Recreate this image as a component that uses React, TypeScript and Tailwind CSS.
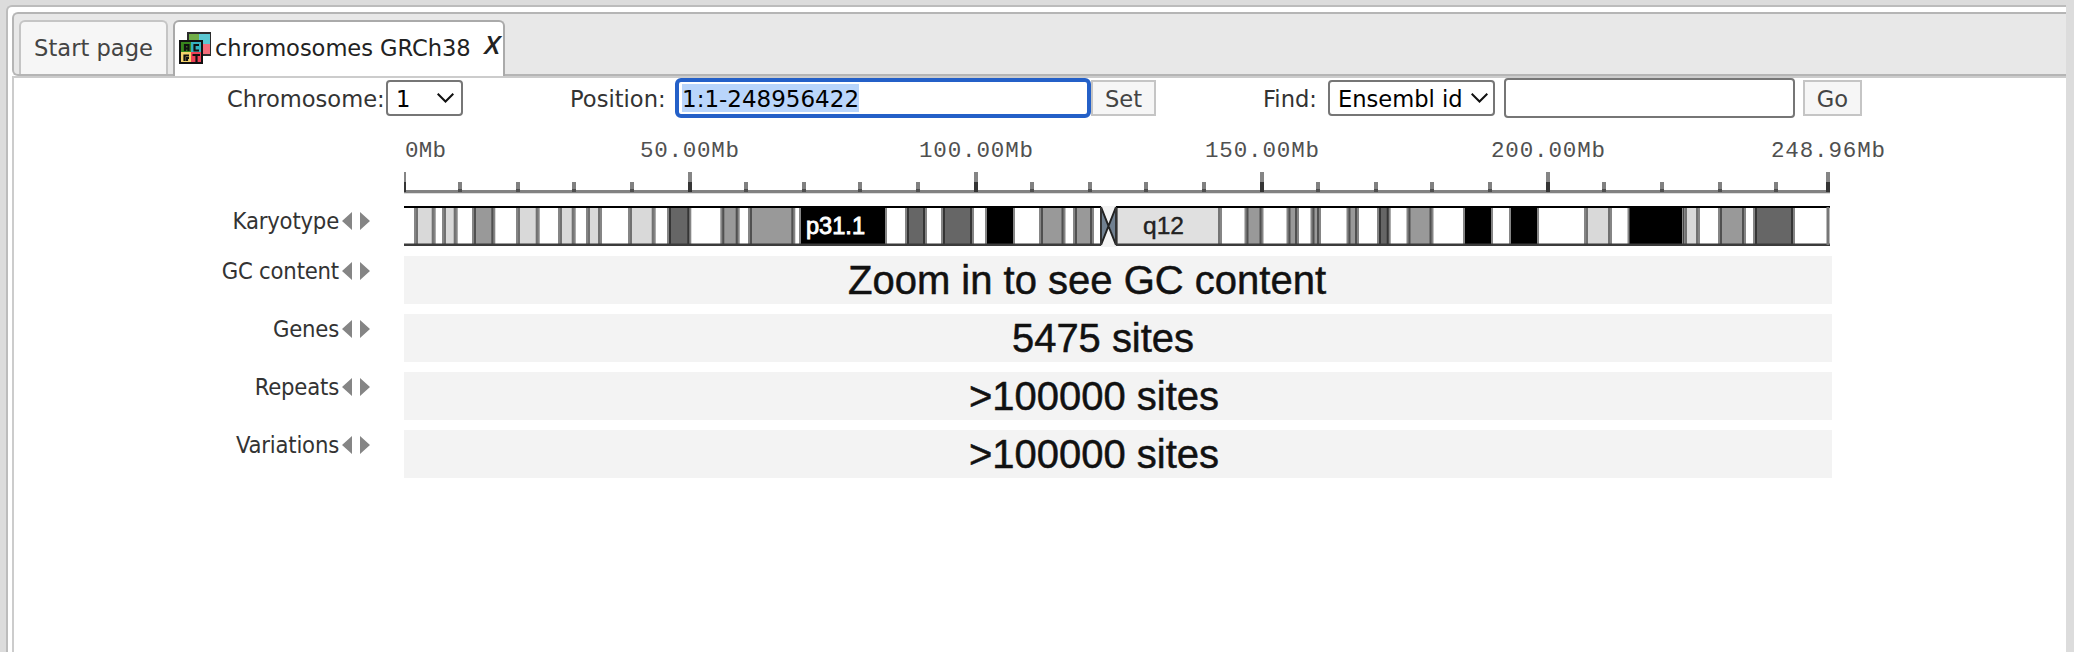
import React from "react";

// [start, end, fill] of every stained band, in pixels from the chromosome's left end
const bands: [number, number, string][] = [
  [12, 29.7, "#d9d9d9"], [40, 51.7, "#d9d9d9"], [70, 89.3, "#999999"], [114, 133.7, "#d9d9d9"],
  [156, 169.7, "#d9d9d9"], [184, 196, "#d9d9d9"], [226, 249.7, "#d9d9d9"], [265, 285.3, "#666666"],
  [318.3, 333.7, "#999999"], [346, 389.3, "#999999"], [397, 481, "#000000"], [503, 521, "#666666"],
  [539, 568, "#666666"], [583, 609, "#000000"], [637, 659.5, "#999999"], [671, 688, "#999999"],
  [712, 816, "#e0e0e0"], [842.5, 857.5, "#999999"], [884.5, 893, "#999999"], [908.5, 915, "#999999"],
  [944.5, 953, "#999999"], [975, 984.7, "#666666"], [1004.5, 1027.5, "#999999"], [1061, 1087, "#000000"],
  [1107, 1133, "#000000"], [1182, 1206, "#d9d9d9"], [1225.5, 1278, "#000000"], [1281, 1294, "#d9d9d9"],
  [1316, 1340, "#999999"], [1351, 1389, "#666666"],
];

const ticks = [56, 114, 170, 228, 342, 400, 456, 514, 628, 686, 742, 800, 914, 972, 1028, 1086, 1200, 1258, 1316, 1372];
const majors = [0, 286, 572, 858, 1144, 1424];

const scale: [number, number, string][] = [
  [1, 41, "0Mb"], [236, 99, "50.00Mb"], [515, 114, "100.00Mb"],
  [801, 114, "150.00Mb"], [1087, 114, "200.00Mb"], [1367, 114, "248.96Mb"],
];

function Ruler() {
  return (
    <svg width="1500" height="64" className="block" fontFamily="'Liberation Mono', monospace" fontSize="22.5" fill="#505050">
      {scale.map(([x, w, label]) => (
        <text key={label} x={x} y="23" textLength={w} lengthAdjust="spacing">{label}</text>
      ))}
      <rect x="0" y="56" width="1426" height="3" fill="#828282" />
      <rect x="0" y="59" width="1426" height="1" fill="#dedede" />
      {ticks.map((x) => (
        <g key={x}>
          <rect x={x - 2} y="48" width="4" height="8" fill="#808080" />
          <rect x={x - 2} y="55" width="4" height="3" fill="#505050" />
        </g>
      ))}
      {majors.map((x) => (
        <g key={x}>
          <rect x={x - 2} y="38" width="4" height="10" fill="#858585" />
          <rect x={x - 2} y="48" width="4" height="10" fill="#353535" />
        </g>
      ))}
    </svg>
  );
}

function Karyotype() {
  return (
    <svg width="1440" height="42" className="block" fontFamily="'Liberation Sans', sans-serif" fontSize="24">
      <rect x="0" y="0" width="1426" height="38" fill="#ffffff" />
      {bands.map(([a, b, fill]) => (
        <g key={a}>
          <rect x={a} y="0" width={b - a} height="38" fill={fill} />
          <rect x={a - 2} y="0" width="4" height="38" fill="#000000" fillOpacity="0.48" />
          <rect x={b - 2} y="0" width="4" height="38" fill="#000000" fillOpacity="0.48" />
        </g>
      ))}
      <rect x="0" y="0" width="1426" height="2" fill="#000000" />
      <rect x="0" y="37.5" width="1426" height="2.5" fill="#3b3b3b" />
      <rect x="1422.5" y="1" width="3" height="38" fill="#777777" />
      <rect x="697" y="0" width="15" height="41" fill="#f3f3f3" />
      <path d="M697 1L705 19L697 39ZM712 1L705 19L712 39Z" fill="#708090" />
      <path d="M697 1L712 39M712 1L697 39" stroke="#222222" strokeWidth="2" fill="none" />
      <path d="M697 1V39M712 1V39" stroke="#333333" strokeWidth="2" />
      <text x="402" y="28" fill="#ffffff" stroke="#ffffff" strokeWidth="0.9" textLength="59" lengthAdjust="spacingAndGlyphs">p31.1</text>
      <text x="739" y="28" fill="#222222" stroke="#222222" strokeWidth="0.4" textLength="41" lengthAdjust="spacingAndGlyphs">q12</text>
    </svg>
  );
}

function TrackLabel({ children }: { children: React.ReactNode }) {
  return (
    <div className="flex h-[30px] w-[356px] items-center justify-end whitespace-nowrap font-['DejaVu_Sans_Condensed','DejaVu_Sans',sans-serif] text-[23.6px] tracking-[-0.2px] text-[#333] [font-stretch:condensed]">
      <span className="pt-0.5">{children}</span>
      <svg width="28" height="18" className="ml-[3px] block" fill="#858585">
        <path d="M0 9L10 0V18ZM28 9L18 0V18Z" />
      </svg>
    </div>
  );
}

const tracks: [string, string, number, number][] = [
  ["GC content", "Zoom in to see GC content", 444, 478],
  ["Genes", "5475 sites", 608, 182],
  ["Repeats", ">100000 sites", 565, 250],
  ["Variations", ">100000 sites", 565, 250],
];

function SequenceIcon() {
  return (
    <svg width="32" height="32" viewBox="0 0 32 32" className="block shrink-0">
      <path d="M8 0H32V24H8Z" fill="#2c2c2c" />
      <path d="M10 2H20V12H10Z" fill="#70ad47" />
      <path d="M20 2H31V12H20Z" fill="#5bc8d2" />
      <path d="M20 12H31V22H20Z" fill="#f46d7a" />
      <path d="M0 8H24V32H0Z" fill="#111" />
      <path d="M2 10H12V20H2Z" fill="#38851d" />
      <path d="M12 10H22V20H12Z" fill="#35b4c0" />
      <path d="M2 20H12V30H2Z" fill="#f5d36b" />
      <path d="M12 20H22V30H12Z" fill="#ee4055" />
      <path d="M6 19V13H9.500V19M6 16.500H9.500M20 13H15.500V18.500H20M10 23.500H5.500V29M10 26H8V29M13.500 23H21M17.500 23V30" fill="none" stroke="#111" strokeWidth="2.2" />
    </svg>
  );
}

function Chevron() {
  return (
    <svg width="17" height="10" className="block shrink-0" fill="none" stroke="#111" strokeWidth="2">
      <path d="M0.700 0.700L8.500 8.500L16.300 0.700" />
    </svg>
  );
}

export default function App() {
  return (
    <div className="h-[652px] w-[2074px] overflow-hidden bg-[#dcdcdc] pl-1.5 pt-[5px] font-['DejaVu_Sans',sans-serif] text-[22.6px] leading-none text-[#333]">
      <div className="h-[660px] w-[2060px] rounded-tl-md border-l-2 border-t-2 border-[#bcbcbc] bg-white pl-1 pt-[5px]">
        <div className="flex h-16 items-end rounded-l-md border-2 border-r-0 border-[#b5b5b5] bg-[#e8e8e8] pl-[5px]">
          <div className="flex h-[54px] w-[149px] items-center justify-center rounded-t-md border-2 border-b-0 border-[#c5c5c5] bg-[#f6f6f6] text-[#444]">
            <span>Start page</span>
          </div>
          <div className="relative -mb-0.5 ml-[5px] flex h-14 w-[332px] items-center rounded-t-md border-2 border-b-0 border-[#aaa] bg-white pb-0.5 pl-1 text-[#222]">
            <SequenceIcon />
            <span className="ml-1 whitespace-nowrap tracking-[-0.05px]">chromosomes GRCh38</span>
            <span className="absolute right-[3px] top-2.5 origin-right scale-x-110 font-['Open_Sans',sans-serif] text-[25px] font-semibold italic">X</span>
          </div>
        </div>
        <div className="h-[590px] border-l-2 border-t-2 border-[#ccc] bg-white">
          <div className="flex h-10 items-center pl-[213px]">
            <span className="w-[159px] whitespace-nowrap pt-0.5">Chromosome:</span>
            <div className="flex h-9 w-[77px] items-center justify-between rounded-[4px] border-2 border-[#767676] pl-2 pr-[7px] text-black">
              <span className="pt-0.5">1</span><Chevron />
            </div>
            <span className="ml-[107px] w-[105px] whitespace-nowrap pt-0.5">Position:</span>
            <div className="flex h-10 w-[416px] items-center rounded-md border-4 border-[#2460c8] pl-[3px] text-black">
              <span className="flex h-7 items-center bg-[#b9d5fb] pt-0.5 text-[23px]">1:1-248956422</span>
            </div>
            <div className="flex h-9 w-[65px] items-center justify-center border-2 border-[#c5c5c5] bg-[#f6f6f6] pt-0.5 text-[#444]">Set</div>
            <span className="ml-[107px] w-[65px] whitespace-nowrap pt-0.5">Find:</span>
            <div className="flex h-9 w-[167px] items-center justify-between whitespace-nowrap rounded-[4px] border-2 border-[#767676] pl-2 pr-[5px] text-black">
              <span className="pt-0.5">Ensembl id</span><Chevron />
            </div>
            <div className="ml-[9px] h-10 w-[291px] rounded-[4px] border-2 border-[#767676]" />
            <div className="ml-2 flex h-9 w-[59px] items-center justify-center border-2 border-[#c5c5c5] bg-[#f6f6f6] pt-0.5 text-[#444]">Go</div>
          </div>
          <div className="pl-[390px] pt-4"><Ruler /></div>
          <div className="flex h-[58px] pt-2">
            <TrackLabel>Karyotype</TrackLabel>
            <div className="ml-[34px]"><Karyotype /></div>
          </div>
          {tracks.map(([name, text, x, width]) => (
            <div key={name} className="flex h-[58px]">
              <TrackLabel>{name}</TrackLabel>
              <svg width="1428" height="48" className="ml-[34px] block bg-[#f3f3f3]" fontFamily="'Liberation Sans', sans-serif" fontSize="40" fill="#111" stroke="#111" strokeWidth="0.5">
                <text x={x} y="38" textLength={width} lengthAdjust="spacingAndGlyphs">{text}</text>
              </svg>
            </div>
          ))}
        </div>
      </div>
    </div>
  );
}
